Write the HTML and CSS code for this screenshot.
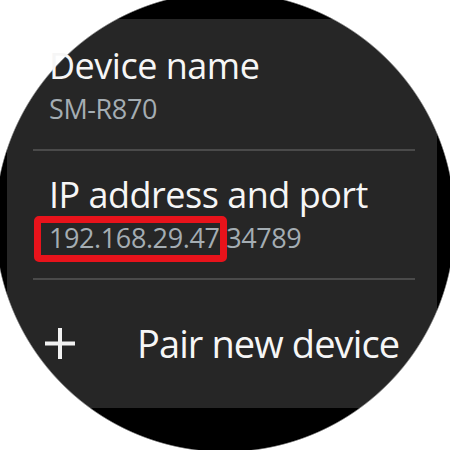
FILE: index.html
```html
<!DOCTYPE html>
<html>
<head>
<meta charset="utf-8">
<link rel="stylesheet" href="styles.css">
</head>
<body>
<div class="screen">
  <div class="item first">
    <div class="title">Device name</div>
    <div class="sub">SM-R870</div>
  </div>
  <div class="sep"></div>
  <div class="item">
    <div class="title">IP address and port</div>
    <div class="sub"><span class="hl">192.168.29.47</span>:34789</div>
  </div>
  <div class="sep"></div>
  <div class="action">
    <svg class="plus" width="30" height="31" viewBox="0 0 30 31"><path d="M15 0V31M0 15.5H30" stroke="#f2f2f2" stroke-width="4" fill="none"/></svg>
    <span class="action-label">Pair new device</span>
  </div>
</div>
</body>
</html>
```
FILE: styles.css
```css
html, body {
  margin: 0;
  padding: 0;
  background: #fff;
}
.screen {
  width: 450px;
  height: 450px;
  overflow: hidden;
  box-sizing: border-box;
  font-family: "Open Sans", "Noto Sans", sans-serif;
  background:
    radial-gradient(circle 230px at 225px 222px, transparent 229px, #fff 230.5px),
    linear-gradient(#262626, #262626) 7px 19px / 430px 389px no-repeat,
    #000;
}
.item {
  padding-left: 49px;
}
.first {
  padding-top: 46px;
}
.title {
  font-size: 36px;
  line-height: 40px;
  letter-spacing: -0.5px;
  color: #f6f6f6;
  white-space: nowrap;
}
.sub {
  margin-top: 5px;
  font-size: 27px;
  line-height: 36px;
  letter-spacing: -0.4px;
  color: #a4adb3;
  white-space: nowrap;
}
.sep {
  height: 2px;
  margin: 22px 35px 0 33px;
  background: #4a4a4a;
}
.sep + .item {
  padding-top: 24px;
}
.hl {
  position: relative;
}
.hl::after {
  content: "";
  position: absolute;
  left: -15px;
  right: -8px;
  top: -3px;
  bottom: -6px;
  border: 7px solid #e8131b;
  border-radius: 5px;
}
.action {
  display: flex;
  align-items: center;
  margin-top: 41px;
  padding-left: 45px;
}
.plus {
  flex: none;
}
.action-label {
  margin-left: 62px;
  font-size: 38px;
  line-height: 44px;
  letter-spacing: -0.9px;
  color: #f6f6f6;
  white-space: nowrap;
}
```
